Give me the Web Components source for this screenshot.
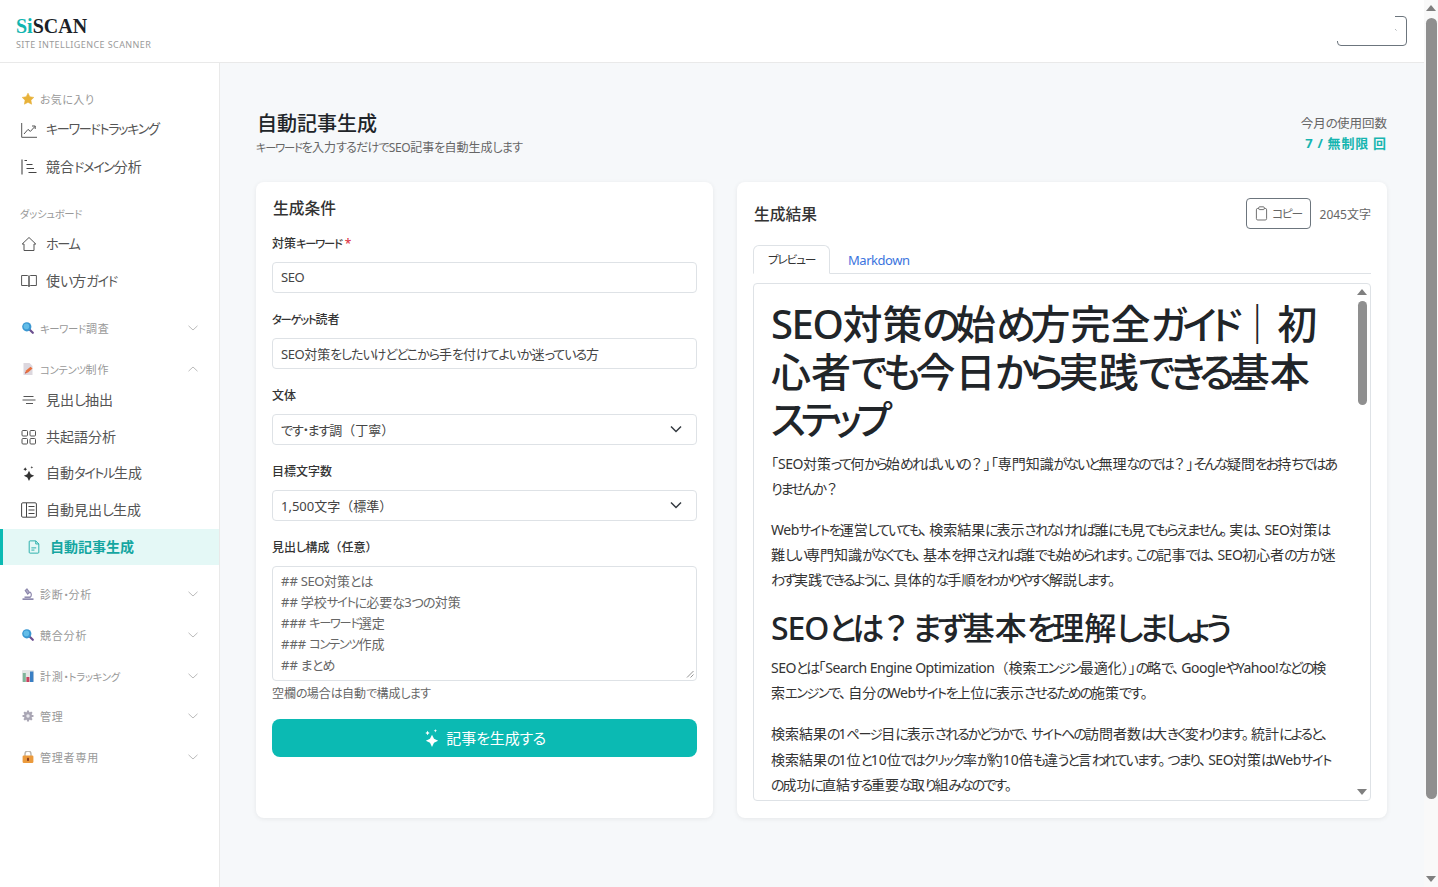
<!DOCTYPE html>
<html lang="ja">
<head>
<meta charset="utf-8">
<title>SiSCAN</title>
<style>
    html, body { margin: 0; height: 887px; overflow: hidden; }
    body {
        font-family: "Noto Sans", "Noto Sans CJK JP", sans-serif;
        color: #212529;
        background: #f6f8fa;
    }
</style>
</head>
<body>
<si-app>
    <si-header slot="header"></si-header>
    <si-sidebar slot="side">
        <nav-group label="お気に入り" icon="star" flat>
            <nav-item icon="chart">キーワードトラッキング</nav-item>
            <nav-item icon="bars">競合ドメイン分析</nav-item>
        </nav-group>
        <nav-group label="ダッシュボード" flat plain>
            <nav-item icon="home">ホーム</nav-item>
            <nav-item icon="book">使い方ガイド</nav-item>
        </nav-group>
        <nav-group label="キーワード調査" icon="search"></nav-group>
        <nav-group label="コンテンツ制作" icon="memo" open>
            <nav-item icon="lines">見出し抽出</nav-item>
            <nav-item icon="grid">共起語分析</nav-item>
            <nav-item icon="sparkles">自動タイトル生成</nav-item>
            <nav-item icon="journal">自動見出し生成</nav-item>
            <nav-item icon="file" active>自動記事生成</nav-item>
        </nav-group>
        <nav-group label="診断・分析" icon="scope"></nav-group>
        <nav-group label="競合分析" icon="search"></nav-group>
        <nav-group label="計測・トラッキング" icon="stats"></nav-group>
        <nav-group label="管理" icon="gear"></nav-group>
        <nav-group label="管理者専用" icon="lock"></nav-group>
    </si-sidebar>
    <si-page slot="main">
        <form-card slot="left"></form-card>
        <result-card slot="right"></result-card>
    </si-page>
</si-app>

<script>
const SPARK = '<path d="M8 6L9.800 9.700 13.500 11.500 9.800 13.300 8 17 6.200 13.300 2.500 11.500 6.200 9.700z"/><path d="M4 2.500l.7 1.300 1.300.7-1.300.7L4 6.500l-.7-1.300L2 4.500l1.300-.7z"/><path d="M11 1l.4 1.100 1.100.4-1.100.4L11 4l-.4-1.100-1.100-.4 1.100-.4z"/>';

const ICONS = {
    star: '<svg viewBox="0 0 12 12"><path d="M6 .2l1.800 3.600 4 .6-2.900 2.800.7 4L6 9.300l-3.600 1.900.7-4L.2 4.400l4-.6z" fill="#e8b23a" stroke="#e8b23a" stroke-width=".6" stroke-linejoin="round"/></svg>',
    search: '<svg viewBox="0 0 12 12"><path d="M7.500 7.500l3.300 3.300" stroke="#6b4f8f" stroke-width="2.200" stroke-linecap="round"/><circle cx="4.800" cy="4.800" r="4.600" fill="#3a98d2"/><circle cx="4.400" cy="4.400" r="2.800" fill="#63bde8"/></svg>',
    memo: '<svg viewBox="0 0 12 12"><path d="M1.500 0h6l3 3v9h-9z" fill="#dcd7de"/><path d="M3 10.500l1-3 4.500-3.800L10.500 5.500 6 9.500z" fill="#e8703f"/><path d="M3 10.500l.5-1.600 1.200 1z" fill="#b04a5a"/></svg>',
    scope: '<svg viewBox="0 0 12 12" fill="none" stroke="#8d88ad" stroke-width="1.200"><path d="M5 1l2.500 3.500-1.800 1.500L3.300 2.500z" fill="#b5b1c9"/><path d="M8 4a3.500 3.500 0 0 1 0 5.500"/><path d="M.5 11.200h11" stroke-width="1.800"/><path d="M2.500 9.200h5.500" stroke-width="1.500"/></svg>',
    stats: '<svg viewBox="0 0 12 12"><rect width="12" height="12" rx="1" fill="#e4e7e6"/><rect x=".8" y="3" width="3" height="9" fill="#7fb59a"/><rect x="4.400" y="7" width="3" height="5" fill="#c9405e"/><rect x="8" y="1.500" width="3.400" height="10.500" fill="#3a7fc4"/></svg>',
    gear: '<svg viewBox="0 0 14 14"><g fill="#a9a6b4"><circle cx="7" cy="7" r="4.600"/><rect x="5.700" y=".6" width="2.600" height="12.800" rx=".6"/><rect x=".6" y="5.700" width="12.800" height="2.600" rx=".6"/><rect x="5.700" y=".6" width="2.600" height="12.800" rx=".6" transform="rotate(45 7 7)"/><rect x="5.700" y=".6" width="2.600" height="12.800" rx=".6" transform="rotate(-45 7 7)"/></g><circle cx="7" cy="7" r="2" fill="#e9e8ee"/></svg>',
    lock: '<svg viewBox="0 0 12 12"><path d="M3 5V3a3 3 0 0 1 6 0v2" fill="none" stroke="#b9b5ad" stroke-width="1.400"/><rect x=".6" y="4.500" width="10.800" height="7.500" rx="1.200" fill="#eb9a3c"/><rect x="5" y="6.800" width="2" height="3.200" rx=".8" fill="#8a3d1e"/></svg>',
    chart: '<svg viewBox="0 0 16 16" fill="none" stroke="#555" stroke-width="1"><path d="M.7 1v14.300H16"/><path d="M3 12l4-4.600 2.400 2L14 4.400M11 4h3.200v3" stroke-linejoin="round"/></svg>',
    bars: '<svg viewBox="0 0 16 16" fill="none" stroke="#444" stroke-width="1.200"><path d="M1 .5v15" stroke-width="1.700" stroke="#888"/><path d="M3.500 1.500h2.500M5.500 5.500h6M5.500 9.500h7.500M7.500 13.500h8"/></svg>',
    home: '<svg viewBox="0 0 16 16" fill="none" stroke="#555" stroke-width="1"><path d="M8 1.500L1.200 8H3v6.500h10V8h1.800z" stroke-linejoin="round"/></svg>',
    book: '<svg viewBox="0 0 16 16" fill="none" stroke="#555" stroke-width="1"><path d="M.6 2.500h5.900c.8 0 1.500.6 1.500 1.500v9.500c0-.8-.7-1-1.500-1H.6zM15.400 2.500H9.500C8.700 2.500 8 3.100 8 4v9.500c0-.8.7-1 1.500-1h5.900z"/></svg>',
    lines: '<svg viewBox="0 0 16 16" fill="none" stroke="#555" stroke-width="1"><path d="M2.500 4.500h10M1.500 8h13M5 11.500h7"/></svg>',
    grid: '<svg viewBox="0 0 16 16" fill="none" stroke="#555" stroke-width="1"><rect x="1" y="1.500" width="5.500" height="5.500" rx="1"/><rect x="9" y="1.500" width="5.500" height="5.500" rx="1"/><rect x="1" y="9.500" width="5.500" height="5.500" rx="1"/><rect x="9" y="9.500" width="5.500" height="5.500" rx="1"/></svg>',
    sparkles: `<svg viewBox="0 0 16 17" fill="#333">${SPARK}</svg>`,
    journal: '<svg viewBox="0 0 16 16" fill="none" stroke="#444" stroke-width="1"><rect x=".6" y=".8" width="14.800" height="14.400" rx="1.200"/><path d="M5.500 1v14M7.500 4.500h6M7.500 8h6M7.500 11.500h6"/></svg>',
    file: '<svg viewBox="0 0 14 16" fill="none" stroke="#17a8a3" stroke-width="1"><path d="M2.500 1h6.500l3.500 3.500V14a1 1 0 0 1-1 1h-9a1 1 0 0 1-1-1V2a1 1 0 0 1 1-1z"/><path d="M9 1v3.500h3.500M4 9h5.500M4 11.500h3.500"/></svg>',
    clipboard: '<svg viewBox="0 0 14 16" fill="none" stroke="#666" stroke-width="1"><rect x="1.500" y="2.500" width="11" height="12.500" rx="1.500"/><rect x="4" y=".8" width="6" height="3" rx="1" fill="#fff"/></svg>',
    wand: `<svg viewBox="0 0 16 17" fill="#fff">${SPARK}</svg>`
};

const CHEVRON_DOWN = '<svg viewBox="0 0 10 6" fill="none" stroke="#bbb" stroke-width="1"><path d="M.5.8L5 5 9.500.8"/></svg>';
const CHEVRON_UP = '<svg viewBox="0 0 10 6" fill="none" stroke="#bbb" stroke-width="1"><path d="M.5 5.200L5 1l4.500 4.200"/></svg>';

// the reference font sets kana and latin narrower than Noto does, so runs get tightened here
const RUNS = [
    [/^[\u30A0-\u30FF]+/, 'font-feature-settings:"palt";line-height:0;font-size:var(--kana-size, .94em);letter-spacing:calc(var(--ls, 0px) + var(--kana-ls, -.105em))'],
    [/^[\u3040-\u309F]+/, 'font-feature-settings:"palt";letter-spacing:calc(var(--ls, 0px) + var(--hira, -.065em))'],
    [/^[A-Za-z !.]+/, 'font-family:var(--latin, inherit);letter-spacing:calc(var(--ls, 0px) - .035em)'],
    [/^[「」・]+/, 'font-feature-settings:"palt"'],
    [/^[、。]+/, 'font-feature-settings:"palt";letter-spacing:.15em']
];

function tuneText(root) {
    const walker = document.createTreeWalker(root, NodeFilter.SHOW_TEXT);
    const nodes = [];
    while (walker.nextNode()) {
        const parent = walker.currentNode.parentNode;
        if (parent.nodeName !== 'STYLE' && walker.currentNode.data.trim()) nodes.push(walker.currentNode);
    }
    nodes.forEach((node) => {
        const frag = document.createDocumentFragment();
        let rest = node.data;
        while (rest) {
            const run = RUNS.map(([re, css]) => [re.exec(rest), css]).find(([m]) => m);
            if (run) {
                const span = document.createElement('span');
                span.style.cssText = run[1];
                span.textContent = run[0][0];
                frag.appendChild(span);
                rest = rest.slice(run[0][0].length);
            } else {
                const plain = /^[^\u30A0-\u30FF\u3040-\u309FA-Za-z !.「」・、。]+/.exec(rest)[0];
                frag.appendChild(document.createTextNode(plain));
                rest = rest.slice(plain.length);
            }
        }
        node.replaceWith(frag);
    });
}

class SiApp extends HTMLElement {
    constructor() {
        super();
        this.attachShadow({ mode: 'open' });
    }

    connectedCallback() {
        this.shadowRoot.innerHTML = `
            <style>
                :host { display: grid; grid-template-columns: 1424px 14px; height: 887px; }
                .content { display: flex; flex-direction: column; min-width: 0; height: 887px; }
                .body { display: flex; flex: 1; min-height: 0; }
                .bar { background: #f9f9f9; }
            </style>
            <div class="content">
                <slot name="header"></slot>
                <div class="body">
                    <slot name="side"></slot>
                    <slot name="main"></slot>
                </div>
            </div>
            <fake-scrollbar class="bar" thumb-top="7" thumb-height="781" size="11"></fake-scrollbar>
        `;
    }
}

class FakeScrollbar extends HTMLElement {
    constructor() {
        super();
        this.attachShadow({ mode: 'open' });
    }

    connectedCallback() {
        const top = this.getAttribute('thumb-top');
        const height = this.getAttribute('thumb-height');
        const size = Number(this.getAttribute('size'));
        this.shadowRoot.innerHTML = `
            <style>
                :host { display: flex; flex-direction: column; align-items: center; justify-content: space-between; box-sizing: border-box; padding: 5px 0; height: 100%; }
                .arrow { width: 0; height: 0; border-left: 5px solid transparent; border-right: 5px solid transparent; }
                .up { border-bottom: 6px solid #7f7f7f; }
                .down { border-top: 6px solid #7f7f7f; }
                .track { flex: 1; width: ${size}px; }
                .thumb { width: ${size}px; height: ${height}px; margin-top: ${top}px; border-radius: ${size / 2}px; background: #8f8f8f; }
            </style>
            <div class="arrow up"></div>
            <div class="track"><div class="thumb"></div></div>
            <div class="arrow down"></div>
        `;
    }
}

class SiHeader extends HTMLElement {
    constructor() {
        super();
        this.attachShadow({ mode: 'open' });
    }

    connectedCallback() {
        this.shadowRoot.innerHTML = `
            <style>
                :host { display: flex; align-items: center; justify-content: space-between; box-sizing: border-box; height: 63px; padding: 0 17px 0 16px; background: #fff; border-bottom: 1px solid #e9e9e9; flex: none; }
                .logo { font: 700 20px/22px "Liberation Serif", serif; color: #1b1f27; margin-top: 4px; }
                .logo b { color: #12b5b0; }
                .tag { font-size: 9px; line-height: 14px; letter-spacing: .42px; color: #9a9a9a; margin-top: 1px; }
                svg { display: block; width: 70px; height: 30px; }
            </style>
            <div>
                <div class="logo"><b>Si</b>SCAN</div>
                <div class="tag">SITE INTELLIGENCE SCANNER</div>
            </div>
            <svg viewBox="0 0 70 30" fill="none" stroke="#6c757d" stroke-width="1">
                <path d="M58 .5h8a3.500 3.500 0 0 1 3.500 3.500v22a3.500 3.500 0 0 1-3.500 3.500H4A3.500 3.500 0 0 1 .5 26v-1"/>
                <path d="M58.500 13.500l.8.8"/>
            </svg>
        `;
    }
}

class SiSidebar extends HTMLElement {
    constructor() {
        super();
        this.attachShadow({ mode: 'open' });
    }

    connectedCallback() {
        this.shadowRoot.innerHTML = `
            <style>
                :host { display: block; box-sizing: border-box; width: 220px; flex: none; padding-top: 25px; background: #fff; border-right: 1px solid #e9e9e9; }
            </style>
            <slot></slot>
        `;
    }
}

class NavGroup extends HTMLElement {
    constructor() {
        super();
        this.attachShadow({ mode: 'open' });
    }

    connectedCallback() {
        const icon = this.getAttribute('icon');
        const flat = this.hasAttribute('flat');
        const open = this.hasAttribute('open');
        const chevron = flat ? '' : (open ? CHEVRON_UP : CHEVRON_DOWN);
        this.shadowRoot.innerHTML = `
            <style>
                :host { display: block; margin-bottom: 18.8px; }
                :host([open]), :host([flat]) { margin-bottom: 17.5px; }
                .head { --ls: .8px; display: flex; align-items: center; height: 22px; padding: 0 21px 0 22px; color: #999; font-size: 11px; letter-spacing: .8px; }
                :host([plain]) .head { padding-left: 20px; }
                .icon { width: 12px; height: 12px; margin-right: 6px; flex: none; }
                .icon svg, .chev svg { display: block; width: 100%; height: 100%; }
                .label { flex: 1; }
                .chev { width: 10px; height: 6px; }
                .items { margin-top: 1.5px; }
            </style>
            <div class="head">
                ${icon ? `<span class="icon">${ICONS[icon]}</span>` : ''}
                <span class="label">${this.getAttribute('label')}</span>
                ${chevron ? `<span class="chev">${chevron}</span>` : ''}
            </div>
            ${this.children.length ? '<div class="items"><slot></slot></div>' : ''}
        `;
        tuneText(this.shadowRoot);
    }
}

class NavItem extends HTMLElement {
    constructor() {
        super();
        this.attachShadow({ mode: 'open' });
    }

    connectedCallback() {
        this.shadowRoot.innerHTML = `
            <style>
                :host { display: flex; align-items: center; box-sizing: border-box; height: 36.8px; padding: 0 0 0 21px; color: #555; font-size: 14px; }
                :host([active]) { padding-left: 24px; border-left: 3px solid #0bbab3; background: #e4f8f6; color: #15a6a1; font-weight: 700; }
                svg { display: block; width: 16px; height: 16px; margin-right: 9px; flex: none; }
                :host([active]) svg { width: 14px; height: 14px; margin-right: 9px; }
                .text { padding-bottom: 2px; }
            </style>
            ${ICONS[this.getAttribute('icon')]}
            <span class="text"><slot></slot></span>
        `;
        tuneText(this);
    }
}

class SiPage extends HTMLElement {
    constructor() {
        super();
        this.attachShadow({ mode: 'open' });
    }

    connectedCallback() {
        this.shadowRoot.innerHTML = `
            <style>
                :host { display: block; flex: 1; min-width: 0; box-sizing: border-box; padding: 48px 37px 0 36px; }
                .head { display: flex; justify-content: space-between; height: 71px; }
                h1 { margin: 0 0 0 1px; font-size: 20px; line-height: 26px; font-weight: 500; }
                .sub { font-size: 12px; line-height: 18px; color: #666; margin-top: 2px; }
                .usage { text-align: right; font-size: 12.5px; line-height: 18px; color: #666; padding-top: 4px; }
                .usage b { --ls: .9px; display: block; font-size: 13px; line-height: 20px; letter-spacing: .9px; color: #17b5b0; }
                .cols { display: grid; grid-template-columns: 457px 650px; gap: 24px; height: 636px; }
            </style>
            <div class="head">
                <div>
                    <h1>自動記事生成</h1>
                    <div class="sub">キーワードを入力するだけでSEO記事を自動生成します</div>
                </div>
                <div class="usage">今月の使用回数<b>7 / 無制限 回</b></div>
            </div>
            <div class="cols">
                <slot name="left"></slot>
                <slot name="right"></slot>
            </div>
        `;
        tuneText(this.shadowRoot);
    }
}

const CARD_CSS = `
    :host { display: block; box-sizing: border-box; height: 636px; background: #fff; border-radius: 8px; box-shadow: 0 1px 5px rgba(0,0,0,.07); padding: 16px; }
    h2 { margin: 0; font-size: 15.75px; line-height: 20px; font-weight: 500; color: #333; }
`;

class FormCard extends HTMLElement {
    constructor() {
        super();
        this.attachShadow({ mode: 'open' });
    }

    field(label, control) {
        return `<div class="field"><div class="label">${label}</div>${control}</div>`;
    }

    connectedCallback() {
        const arrow = '<svg viewBox="0 0 12 8" fill="none" stroke="#343a40" stroke-width="1.5"><path d="M1 1.500l5 5 5-5"/></svg>';
        this.shadowRoot.innerHTML = `
            <style>
                ${CARD_CSS}
                h2 { margin-left: 1px; margin-bottom: 15px; }
                .field { margin-bottom: 16px; }
                .label { height: 20px; margin-bottom: 9px; font-size: 12px; line-height: 22px; font-weight: 500; color: #333; }
                .req { color: #dc3545; margin-left: 3px; }
                .control { --hira: -.08em; display: flex; align-items: center; justify-content: space-between; box-sizing: border-box; height: 31px; padding: 0 14px 1px 8px; border: 1px solid #dee2e6; border-radius: 4px; font-size: 13px; color: #444; background: #fff; }
                .control svg { width: 12px; height: 8px; }
                .area { position: relative; box-sizing: border-box; height: 115px; padding: 4px 8px; border: 1px solid #dee2e6; border-radius: 4px; font-size: 13px; line-height: 21px; color: #666; }
                .grip { position: absolute; right: 2px; bottom: 2px; width: 8px; height: 8px; }
                .help { font-size: 12px; line-height: 18px; color: #666; margin-top: 4px; }
                .go { --hira: -.03em; display: flex; align-items: center; justify-content: center; gap: 5px; box-sizing: border-box; height: 38px; padding-bottom: 2px; margin-top: 16px; border-radius: 8px; background: #0bbab3; color: #fff; font-size: 15px; }
                .go svg { width: 18px; height: 19px; margin-top: 1px; }
                .area-field { margin-bottom: 0; }
            </style>
            <h2>生成条件</h2>
            ${this.field('対策キーワード<span class="req">*</span>', '<div class="control"><span>SEO</span></div>')}
            ${this.field('ターゲット読者', '<div class="control"><span>SEO対策をしたいけどどこから手を付けてよいか迷っている方</span></div>')}
            ${this.field('文体', `<div class="control"><span>です・ます調（丁寧）</span>${arrow}</div>`)}
            ${this.field('目標文字数', `<div class="control"><span>1,500文字（標準）</span>${arrow}</div>`)}
            <div class="field area-field">
                <div class="label">見出し構成（任意）</div>
                <div class="area">## SEO対策とは<br>## 学校サイトに必要な3つの対策<br>### キーワード選定<br>### コンテンツ作成<br>## まとめ
                    <svg class="grip" viewBox="0 0 8 8" stroke="#777" stroke-width=".8"><path d="M1 7.500L7.500 1M4.500 7.500l3-3"/></svg>
                </div>
            </div>
            <div class="help">空欄の場合は自動で構成します</div>
            <div class="go">${ICONS.wand}<span>記事を生成する</span></div>
        `;
        tuneText(this.shadowRoot);
    }
}

class ResultCard extends HTMLElement {
    constructor() {
        super();
        this.attachShadow({ mode: 'open' });
    }

    connectedCallback() {
        this.shadowRoot.innerHTML = `
            <style>
                ${CARD_CSS}
                .top { display: flex; align-items: center; height: 31px; margin-left: 1px; }
                .top h2 { flex: 1; }
                .copy { display: flex; align-items: center; justify-content: center; gap: 4px; box-sizing: border-box; width: 65px; height: 31px; border: 1px solid #6c757d; border-radius: 4px; font-size: 12.5px; color: #666; }
                .copy svg { width: 13px; height: 15px; }
                .count { width: 52px; margin-left: 8px; text-align: right; font-size: 12px; color: #666; white-space: nowrap; }
                .tabs { display: flex; height: 28px; margin-top: 16px; border-bottom: 1px solid #dee2e6; box-sizing: content-box; }
                .tab { display: flex; align-items: center; box-sizing: border-box; height: 29px; font-size: 13px; }
                .tab.on { justify-content: center; width: 77px; margin-bottom: -1px; border: 1px solid #dee2e6; border-bottom-color: #fff; border-radius: 6px 6px 0 0; color: #333; font-size: 12.5px; }
                .tab.link { padding-left: 18px; color: #3b74de; }
                .box { display: flex; height: 518px; margin-top: 9px; border: 1px solid #dee2e6; border-radius: 4px; box-sizing: border-box; overflow: hidden; }
                .doc { --hira: -.145em; flex: 1; min-width: 0; box-sizing: border-box; padding: 16px 17px 0 17px; color: #333; font-size: 14px; line-height: 25.2px; white-space: nowrap; }
                .doc h1 { --hira: -.13em; --kana-size: .97em; --kana-ls: -.13em; --latin: "Noto Sans"; margin: 0 0 6px; font-family: "Liberation Sans", "Noto Sans CJK JP", sans-serif; font-size: 40px; line-height: 47.5px; font-weight: 500; color: #212529; }
                .doc h3 { --hira: -.13em; --kana-size: .97em; --kana-ls: -.13em; margin: 0 0 8.5px; font-size: 32px; line-height: 38px; font-weight: 500; color: #212529; }
                .doc p { margin: 0 0 16px; }
                fake-scrollbar { width: 16px; flex: none; }
            </style>
            <div class="top">
                <h2>生成結果</h2>
                <div class="copy">${ICONS.clipboard}<span>コピー</span></div>
                <div class="count">2045文字</div>
            </div>
            <div class="tabs">
                <div class="tab on"><span>プレビュー</span></div>
                <div class="tab link"><span>Markdown</span></div>
            </div>
            <div class="box">
                <div class="doc">
                    <h1>SEO対策の始め方完全ガイド｜初<br>心者でも今日から実践できる基本<br>ステップ</h1>
                    <p>「SEO対策って何から始めればいいの？」「専門知識がないと無理なのでは？」そんな疑問をお持ちではあ<br>りませんか？</p>
                    <p>Webサイトを運営していても、検索結果に表示されなければ誰にも見てもらえません。実は、SEO対策は<br>難しい専門知識がなくても、基本を押さえれば誰でも始められます。この記事では、SEO初心者の方が迷<br>わず実践できるように、具体的な手順をわかりやすく解説します。</p>
                    <h3>SEOとは？まず基本を理解しましょう</h3>
                    <p>SEOとは「Search Engine Optimization（検索エンジン最適化）」の略で、GoogleやYahoo!などの検<br>索エンジンで、自分のWebサイトを上位に表示させるための施策です。</p>
                    <p>検索結果の1ページ目に表示されるかどうかで、サイトへの訪問者数は大きく変わります。統計によると、<br>検索結果の1位と10位ではクリック率が約10倍も違うと言われています。つまり、SEO対策はWebサイト<br>の成功に直結する重要な取り組みなのです。</p>
                </div>
                <fake-scrollbar thumb-top="6" thumb-height="104" size="9"></fake-scrollbar>
            </div>
        `;
        tuneText(this.shadowRoot);
    }
}

customElements.define('fake-scrollbar', FakeScrollbar);
customElements.define('si-app', SiApp);
customElements.define('si-header', SiHeader);
customElements.define('si-sidebar', SiSidebar);
customElements.define('nav-group', NavGroup);
customElements.define('nav-item', NavItem);
customElements.define('si-page', SiPage);
customElements.define('form-card', FormCard);
customElements.define('result-card', ResultCard);
</script>
</body>
</html>
